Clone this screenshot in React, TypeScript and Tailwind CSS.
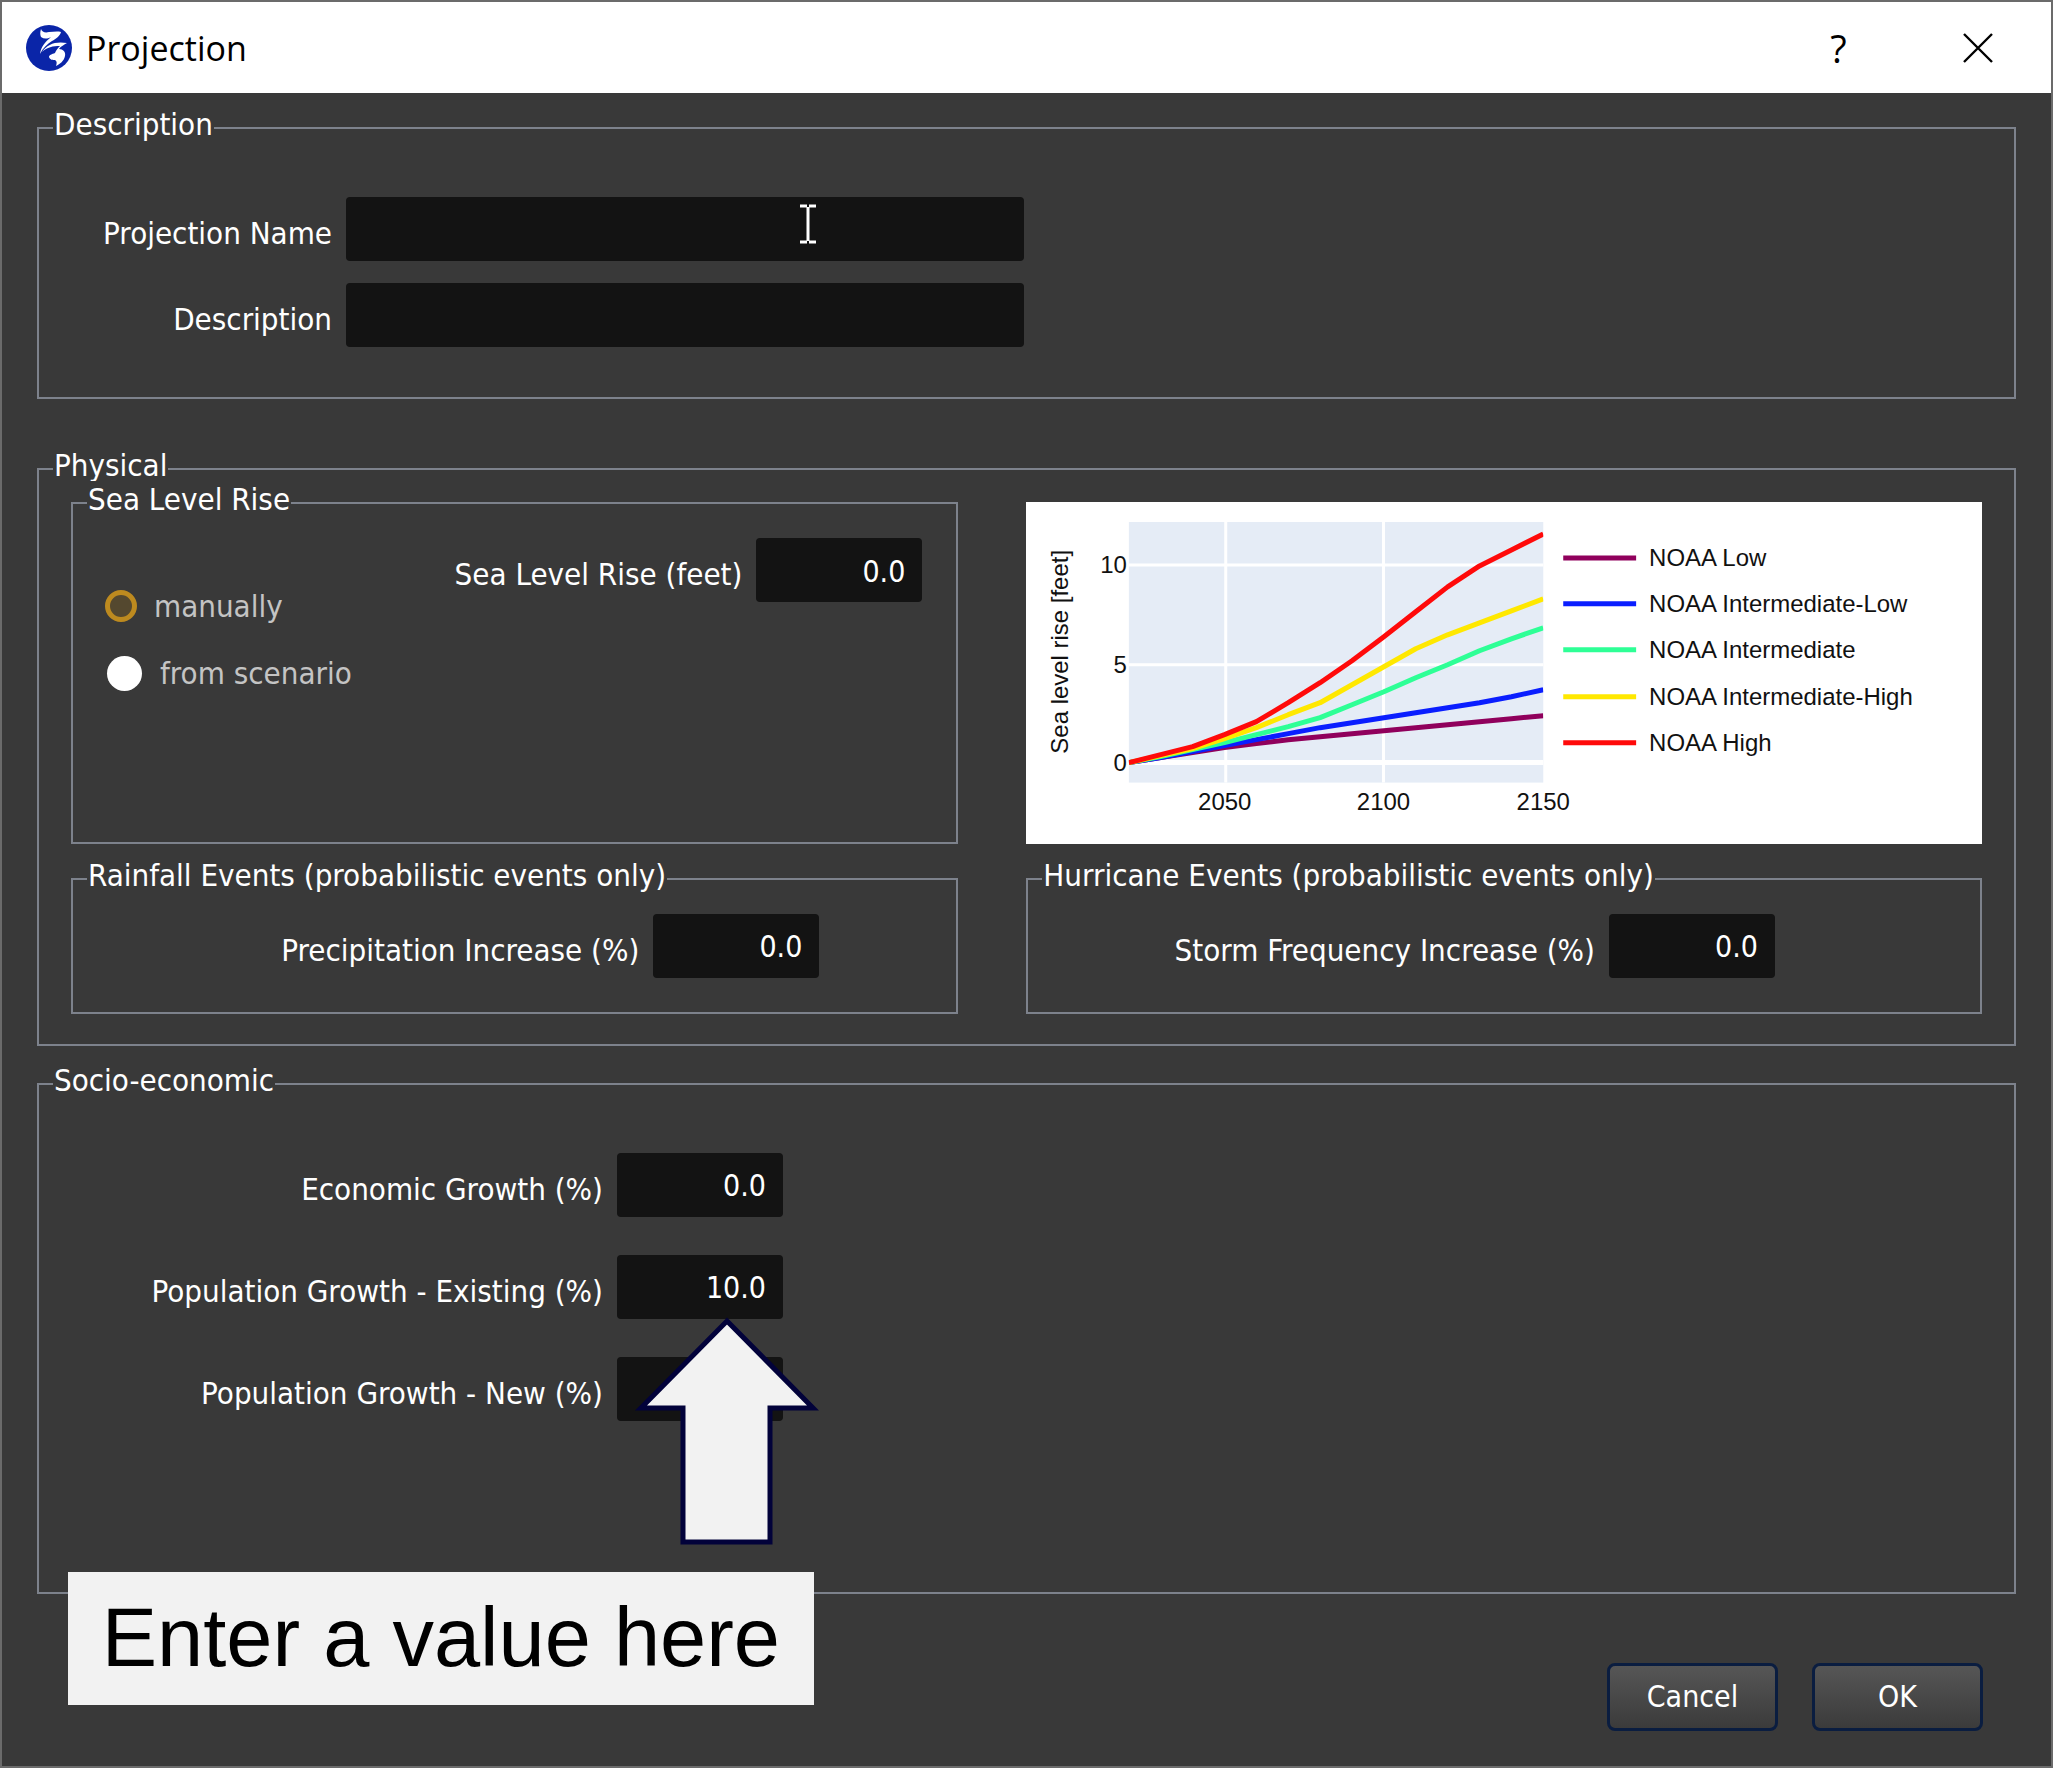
import React from 'react';

const legendBase = 'absolute left-3.5 -top-[23px] h-[38px] bg-[#393939] px-px text-[31px] leading-9 whitespace-nowrap';

function Group({ title, className, children }: { title: string; className: string; children: React.ReactNode }) {
  return (
    <fieldset className={`relative min-w-0 border-2 border-[#7d828c] ${className}`}>
      <legend className={legendBase}>{title}</legend>
      {children}
    </fieldset>
  );
}

function NumberField({ id, label, value }: { id: string; label: string; value: string }) {
  return (
    <div className="flex items-center justify-end gap-3.5">
      <label htmlFor={id} className="pt-2 text-right whitespace-nowrap">{label}</label>
      <input
        id={id}
        type="text"
        inputMode="decimal"
        defaultValue={value}
        className="h-16 w-[166px] shrink-0 rounded bg-[#131313] pt-0.5 pr-[17px] pl-3 text-right outline-none"
      />
    </div>
  );
}

const years = Array.from({ length: 14 }, (_, i) => 103 + (i * 415) / 13);

const series = [
  { name: 'NOAA Low', color: '#90005c', y: [261, 256, 251, 246, 242, 238, 235, 232, 229, 226, 223, 220, 217, 214] },
  { name: 'NOAA Intermediate-Low', color: '#0a1eff', y: [261, 256, 250, 244, 238, 232, 226, 221, 216, 211, 206, 201, 195, 188] },
  { name: 'NOAA Intermediate', color: '#2eff96', y: [261, 255, 248, 241, 233, 225, 216, 203, 190, 176, 163, 149, 137, 126] },
  { name: 'NOAA Intermediate-High', color: '#ffe800', y: [261, 254, 247, 237, 226, 213, 201, 183, 165, 147, 133, 121, 109, 97] },
  { name: 'NOAA High', color: '#ff0a0a', y: [261, 253, 245, 233, 220, 201, 181, 159, 135, 110, 85, 64, 48, 32] },
];

const legendRows = [56, 102, 148, 195, 241];

function SeaLevelChart() {
  return (
    <svg viewBox="0 0 957 342" className="block w-full bg-white font-['Liberation_Sans',Arial,sans-serif] text-[24px]" role="img" aria-label="Sea level rise scenarios">
      <rect x="103" y="20" width="415" height="261" fill="#e5ecf6" />
      <g stroke="#fff" strokeWidth="3">
        <path d="M200 20V281M358 20V281M103 63H518M103 163H518" />
        <path d="M103 261H518" strokeWidth="5" />
      </g>
      <clipPath id="plot">
        <rect x="103" y="20" width="415" height="261" />
      </clipPath>
      <g clipPath="url(#plot)" fill="none" strokeWidth="5" strokeLinejoin="round">
        {series.map((s) => (
          <polyline key={s.name} stroke={s.color} points={s.y.map((y, i) => `${years[i]},${y}`).join(' ')} />
        ))}
      </g>
      <g fill="#111">
        <text x="101" y="71" textAnchor="end">10</text>
        <text x="101" y="171" textAnchor="end">5</text>
        <text x="101" y="269" textAnchor="end">0</text>
        <text x="199" y="308" textAnchor="middle">2050</text>
        <text x="358" y="308" textAnchor="middle">2100</text>
        <text x="518" y="308" textAnchor="middle">2150</text>
        <text transform="translate(42 150) rotate(-90)" textAnchor="middle">Sea level rise [feet]</text>
      </g>
      {series.map((s, i) => (
        <g key={s.name}>
          <path d={`M538 ${legendRows[i]}h73`} stroke={s.color} strokeWidth="5" />
          <text x="624" y={legendRows[i] + 8} fill="#111">{s.name}</text>
        </g>
      ))}
    </svg>
  );
}

export default function App() {
  return (
    <div className="flex min-h-screen flex-col border-2 border-[#6b6b6b] bg-[#393939] font-['DejaVu_Sans_Condensed','DejaVu_Sans',sans-serif] text-[31px] leading-9 text-white [&_input]:text-[30px]">
      <header className="flex h-[91px] items-center bg-white pl-6 text-black">
        <svg viewBox="0 0 46 46" className="size-[46px]" aria-hidden="true">
          <circle cx="23" cy="23" r="23" fill="#0a25a8" />
          <path d="M15 4c1 3 4 4 8 3 4 0 8-1 12 0-1 4-5 7-9 9-5 3-9 7-12 13 1-7 5-12 11-17-4 2-7 2-10 0-1-2-1-5 0-8Z" fill="#fff" />
          <path d="M16 27c5-8 14-11 25-9-3 2-6 3-8 6 4 0 7 3 6 7-1 5-5 8-9 10 1-3 1-5-1-6-2 0-5 0-6-3 0-2 3-3 6-4 1-3 3-5 5-7-7 0-13 1-18 6Z" fill="#fff" />
        </svg>
        <h1 className="ml-3.5 flex-1 pt-px font-['Open_Sans','Noto_Sans',sans-serif] text-[34px] leading-none">Projection</h1>
        <button type="button" aria-label="Help" className="flex h-full w-[133px] items-center justify-center font-['Open_Sans',sans-serif] text-[38px]">?</button>
        <button type="button" aria-label="Close" className="flex h-full w-[146px] items-center justify-center">
          <svg viewBox="0 0 30 30" className="size-[30px]" stroke="#000" strokeWidth="2.4" aria-hidden="true">
            <path d="M1 1l28 28M29 1L1 29" />
          </svg>
        </button>
      </header>

      <main className="px-[35px] pt-[34px]">
        <Group title="Description" className="px-6 pt-[68px] pb-[50px]">
          <div className="grid grid-cols-[269px_678px] items-center gap-x-3.5 gap-y-[22px]">
            <label htmlFor="name" className="pt-2 text-right whitespace-nowrap">Projection Name</label>
            <div className="relative">
              <input id="name" type="text" className="block h-16 w-full rounded bg-[#131313] px-4 outline-none" />
              <svg viewBox="0 0 18 42" className="pointer-events-none absolute top-1.5 left-[453px] h-[42px] w-[18px]" fill="none" aria-hidden="true">
                <path d="M1 3h7M10 3h7M9 4v34M1 39h7M10 39h7" stroke="#fff" strokeWidth="3" />
              </svg>
            </div>
            <label htmlFor="desc" className="pt-2 text-right whitespace-nowrap">Description</label>
            <input id="desc" type="text" className="block h-16 w-full rounded bg-[#131313] px-4 outline-none" />
          </div>
        </Group>

        <Group title="Physical" className="mt-[69px] px-8 pt-8 pb-[30px]">
          <div className="grid grid-cols-[13fr_14fr] gap-x-[68px] gap-y-[34px]">
            <Group title="Sea Level Rise" className="flex items-start justify-between pt-[34px] pr-[34px] pl-8">
              <div className="mt-[50px] flex flex-col gap-[31px] text-[#c4c4c4]">
                <label className="flex items-center gap-[17px]">
                  <input type="radio" name="slr" defaultChecked className="size-8 appearance-none rounded-full border-[5px] border-[#bd8a1f] bg-[#54482f]" />
                  manually
                </label>
                <label className="flex items-center gap-[18px] pl-0.5">
                  <input type="radio" name="slr" className="size-[35px] appearance-none rounded-full bg-white" />
                  from scenario
                </label>
              </div>
              <NumberField id="slr-feet" label="Sea Level Rise (feet)" value="0.0" />
            </Group>
            <SeaLevelChart />
            <Group title="Rainfall Events (probabilistic events only)" className="pt-[34px] pr-[137px] pb-[34px]">
              <NumberField id="rain" label="Precipitation Increase (%)" value="0.0" />
            </Group>
            <Group title="Hurricane Events (probabilistic events only)" className="pt-[34px] pr-[205px] pb-[34px]">
              <NumberField id="storm" label="Storm Frequency Increase (%)" value="0.0" />
            </Group>
          </div>
        </Group>

        <Group title="Socio-economic" className="mt-[37px] flex h-[511px] pt-[68px] pl-[68px]">
          <div className="flex w-[676px] flex-col gap-[38px]">
            <NumberField id="econ" label="Economic Growth (%)" value="0.0" />
            <div className="relative">
              <NumberField id="pop-existing" label="Population Growth - Existing (%)" value="10.0" />
              <svg viewBox="0 0 186 228" className="pointer-events-none absolute top-[62px] -right-[37px] z-10 h-[228px] w-[186px]" aria-hidden="true">
                <path d="M93 4L179 91H136V225H49V91H7Z" fill="#f2f2f2" stroke="#02023a" strokeWidth="5" />
              </svg>
              <div className="absolute top-[317px] -right-[31px] z-10 bg-[#f2f2f2] px-[34px] pt-3 pb-[13px] font-['Liberation_Sans',Arial,sans-serif] text-[83px] leading-[108px] whitespace-nowrap text-black">
                Enter a value here
              </div>
            </div>
            <NumberField id="pop-new" label="Population Growth - New (%)" value="0.0" />
          </div>
        </Group>
      </main>

      <footer className="flex justify-end gap-[34px] px-[68px] pt-[69px] pb-[35px] text-[30px]">
        <button type="button" className="h-[68px] w-[171px] rounded-lg border-[3px] border-[#0a1d40] bg-linear-to-b from-[#565656] to-[#3b3b3b]">Cancel</button>
        <button type="button" className="h-[68px] w-[171px] rounded-lg border-[3px] border-[#0a1d40] bg-linear-to-b from-[#565656] to-[#3b3b3b]">OK</button>
      </footer>
    </div>
  );
}
